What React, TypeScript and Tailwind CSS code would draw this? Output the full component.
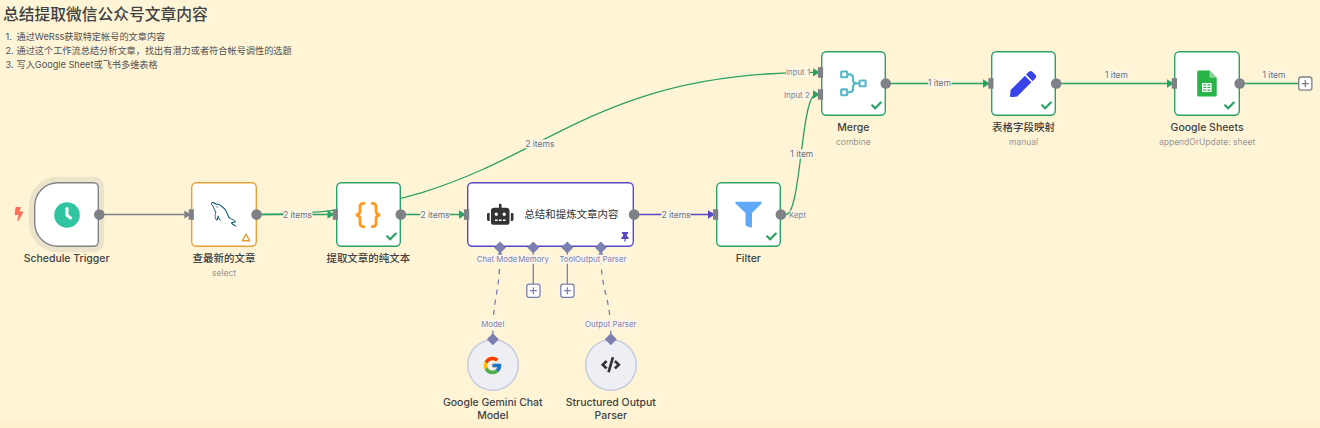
import React from "react";
import { FaRobot, FaThumbtack, FaCheck, FaBolt, FaPen, FaCode } from "react-icons/fa";
import { FcGoogle } from "react-icons/fc";
import { GrMysql } from "react-icons/gr";

type BoxProps = { className: string; children?: React.ReactNode };

type NodeProps = {
  place: string;
  box: string;
  title?: React.ReactNode;
  sub?: string;
  done?: boolean;
  children: React.ReactNode;
};

/** A node on the canvas: the icon box with its caption stacked below. */
function Node({ place, box, title, sub, done, children }: NodeProps) {
  return (
    <div className={`absolute flex flex-col items-center gap-[4.6px] ${place}`}>
      <div className={`relative flex shrink-0 items-center justify-center ${box}`}>
        {children}
        {done && <FaCheck className="absolute bottom-[5px] right-[4.4px] size-[11px] text-[#2ba164]" />}
      </div>
      {title && (
        <div className="flex flex-col items-center gap-[2.4px] whitespace-nowrap text-center">
          <div className="text-[10.47px] font-medium leading-[13px] text-[#414244]">{title}</div>
          {sub && <div className="text-[8.5px] leading-[12px] text-[#9a9794]">{sub}</div>}
        </div>
      )}
    </div>
  );
}

const successBox = "size-[65.4px] rounded-[5.2px] bg-white shadow-[inset_0_0_0_1.4px_#2ba164]";
const circleBox = "size-[52.4px] rounded-full bg-[#eeeff5] shadow-[inset_0_0_0_1.4px_#c5c9da]";

function EdgeLabel({ className, children }: BoxProps) {
  return (
    <div
      className={`absolute -translate-x-1/2 -translate-y-1/2 whitespace-nowrap bg-[#fbf6e7] text-[8.5px] leading-[9px] text-[#6f7178] ${className}`}
    >
      {children}
    </div>
  );
}

function PortLabel({ className, children }: BoxProps) {
  return (
    <div
      className={`absolute -translate-x-1/2 -translate-y-1/2 whitespace-nowrap bg-[#fbf6e9] text-[7.85px] leading-[8.5px] ${className}`}
    >
      {children}
    </div>
  );
}

function Edges() {
  return (
    <svg className="absolute inset-0" width="1320" height="428" viewBox="0 0 1320 428" fill="none">
      <path d="M99 214.5H187" stroke="#7e8186" strokeWidth="1.3" />
      <path d="M184.3 210.6L191 214.5L184.3 218.4Z" fill="#7e8186" />
      <g stroke="#2ba164" strokeWidth="1.3">
        <path d="M257 214.5H331" />
        <path d="M257 214.5C536 214.5 536 72.3 815 72.3" />
        <path d="M401 214.5H462" />
        <path d="M786 214.5C801 214.5 801 94.5 816 94.5" />
        <path d="M886 83.5H986" />
        <path d="M1056 83.5H1169" />
        <path d="M1240 83.5H1298" />
      </g>
      <g fill="#2ba164">
        <path d="M327.5 210.2L334.5 214.5L327.5 218.8Z" />
        <path d="M459 210.2L466 214.5L459 218.8Z" />
        <path d="M813 68.2L820 72.3L813 76.6Z" />
        <path d="M813 90.2L820 94.5L813 98.8Z" />
        <path d="M983 79.2L990 83.5L983 87.8Z" />
        <path d="M1167 79.2L1174 83.5L1167 87.8Z" />
      </g>
      <path d="M634 214.5H711" stroke="#5a48c4" strokeWidth="1.3" />
      <path d="M708 210.2L715 214.5L708 218.8Z" fill="#5a48c4" />
      <g stroke="#7b7fb2" strokeWidth="1.3">
        <path d="M533.3 250V284" />
        <path d="M567.3 250V284" />
        <path d="M492.8 337C492.8 294 500 294 500 252" strokeDasharray="5.2 5.2" strokeDashoffset="-1" />
        <path d="M610.8 337C610.8 294 600.8 294 600.8 252" strokeDasharray="5.2 5.2" strokeDashoffset="-1" />
      </g>
      <path d="M497 256L500 250L503 256ZM597.8 256L600.8 250L603.8 256Z" fill="#7b7fb2" />
    </svg>
  );
}

function Handles() {
  return (
    <svg className="absolute inset-0" width="1320" height="428" viewBox="0 0 1320 428">
      <g fill="#7e8186">
        <circle cx="99.3" cy="214.6" r="5.3" />
        <circle cx="256.6" cy="214.6" r="5.3" />
        <circle cx="400.8" cy="214.6" r="5.3" />
        <circle cx="634.1" cy="214.6" r="5.3" />
        <circle cx="780.9" cy="214.6" r="5.3" />
        <circle cx="885.8" cy="83.5" r="5.3" />
        <circle cx="1056.2" cy="83.5" r="5.3" />
        <circle cx="1239.7" cy="83.5" r="5.3" />
        <rect x="188.7" y="209.3" width="5.2" height="10.5" />
        <rect x="332.8" y="209.3" width="5.2" height="10.5" />
        <rect x="464" y="209.3" width="5.2" height="10.5" />
        <rect x="713" y="209.3" width="5.2" height="10.5" />
        <rect x="817.9" y="67.2" width="5.2" height="10.5" />
        <rect x="817.9" y="89.2" width="5.2" height="10.5" />
        <rect x="988.3" y="78.2" width="5.2" height="10.5" />
        <rect x="1171.8" y="78.2" width="5.2" height="10.5" />
      </g>
      <g fill="#7b7fb2">
        <path d="M500 241.5L506 247.5L500 253.5L494 247.5Z" />
        <path d="M533.3 241.5L539.3 247.5L533.3 253.5L527.3 247.5Z" />
        <path d="M567.3 241.5L573.3 247.5L567.3 253.5L561.3 247.5Z" />
        <path d="M600.8 241.5L606.8 247.5L600.8 253.5L594.8 247.5Z" />
        <path d="M492.8 333.3L498.8 339.3L492.8 345.3L486.8 339.3Z" />
        <path d="M610.8 333.3L616.8 339.3L610.8 345.3L604.8 339.3Z" />
      </g>
      <g fill="#fff" stroke="#7b7fb2" strokeWidth="1.3">
        <rect x="526.8" y="284.1" width="13.2" height="13.2" rx="2.4" />
        <rect x="560.8" y="284.1" width="13.2" height="13.2" rx="2.4" />
        <path d="M533.4 287.2V294.2M529.9 290.7H536.9M567.4 287.2V294.2M563.9 290.7H570.9" />
      </g>
      <g fill="#fff" stroke="#7e8186" strokeWidth="1.3">
        <rect x="1298.7" y="77" width="13.2" height="13.2" rx="2.4" />
        <path d="M1305.3 80.1V87.1M1301.8 83.6H1308.8" />
      </g>
    </svg>
  );
}

export default function App() {
  return (
    <main className="relative h-[428px] w-[1320px] overflow-hidden bg-[linear-gradient(to_bottom,#fff5d6_414px,#fff0cd_428px)] font-['Inter','Noto_Sans_CJK_SC',sans-serif]">
      <header className="flex flex-col gap-[5px] pl-[3px] pt-[4px] text-[#414244]">
        <h1 className="text-[15.75px] font-medium leading-[21px]">总结提取微信公众号文章内容</h1>
        <ol className="pl-[2.5px] text-[9.19px] leading-[14px] text-[#505053]">
          <li className="flex"><span className="w-[11px]">1.</span><span>通过WeRss获取特定帐号的文章内容</span></li>
          <li className="flex"><span className="w-[11px]">2.</span><span>通过这个工作流总结分析文章，找出有潜力或者符合帐号调性的选题</span></li>
          <li className="flex"><span className="w-[11px]">3.</span><span>写入Google Sheet或飞书多维表格</span></li>
        </ol>
      </header>

      <Edges />

      <FaBolt className="absolute left-[13px] top-[207px] h-[14px] w-[12px] text-[#ff6f5c]" />
      <Node
        place="left-[6.6px] top-[182px] w-[120px]"
        box="size-[65.4px] rounded-[24px_5.2px_5.2px_24px] bg-white shadow-[inset_0_0_0_1.4px_#7e8186,0_0_0_5.2px_#ebe3ca]"
        title="Schedule Trigger"
      >
        <svg width="26" height="26" viewBox="0 0 26 26" fill="none">
          <circle cx="13" cy="13" r="12.8" fill="#31c4a0" />
          <path d="M13 6.5V13.2L16.5 16" stroke="#fff" strokeWidth="3" strokeLinecap="round" />
        </svg>
      </Node>

      <Node
        place="left-[164px] top-[182px] w-[120px]"
        box="size-[65.4px] rounded-[5.2px] bg-white shadow-[inset_0_0_0_1.4px_#e5a03c]"
        title="查最新的文章"
        sub="select"
      >
        <GrMysql className="size-[26px] text-[#00546b]" />
        <svg className="absolute bottom-[5.5px] right-[5.5px]" width="10" height="9" viewBox="0 0 10 9" fill="none">
          <path d="M5 1.2L8.8 7.8H1.2Z" stroke="#e5a03c" strokeWidth="1.4" strokeLinejoin="round" />
        </svg>
      </Node>

      <Node place="left-[308.3px] top-[182px] w-[120px]" box={successBox} title="提取文章的纯文本" done>
        <svg width="26" height="26" viewBox="0 0 26 26" fill="none" stroke="#ff9922" strokeWidth="2.8">
          <path d="M10 1.4H8.4Q5 1.4 5 4.8V8.8Q5 13 0.6 13Q5 13 5 17.2V21.2Q5 24.6 8.4 24.6H10" />
          <path d="M16 1.4H17.6Q21 1.4 21 4.8V8.8Q21 13 25.4 13Q21 13 21 17.2V21.2Q21 24.6 17.6 24.6H16" />
        </svg>
      </Node>

      <Node
        place="left-[466.6px] top-[182px] w-[167.6px]"
        box="h-[65.4px] w-[167.6px] gap-[10.5px] rounded-[5.2px] bg-white pl-[5px] shadow-[inset_0_0_0_1.4px_#5a48c4]"
      >
        <FaRobot className="size-[26.5px] text-[#333]" />
        <span className="whitespace-nowrap text-[10.47px] text-[#333]">总结和提炼文章内容</span>
        <FaThumbtack className="absolute bottom-[5.5px] right-[4px] size-[10px] text-[#5a48c4]" />
      </Node>

      <Node place="left-[688.3px] top-[182px] w-[120px]" box={successBox} title="Filter" done>
        <svg width="27" height="27" viewBox="0 0 27 27" fill="#60a9f8">
          <path d="M.5 .7H26.5V2.6L17 12V26.2Q15 27.4 10.5 24.2V12L.5 2.6Z" />
        </svg>
      </Node>

      <Node place="left-[793.3px] top-[51px] w-[120px]" box={successBox} title="Merge" sub="combine" done>
        <svg width="27" height="27" viewBox="0 0 27 27" fill="none" stroke="#54b8c9" strokeWidth="2.1">
          <rect x="1.2" y="1.5" width="6" height="5.8" rx=".6" />
          <rect x="1.2" y="19.4" width="6" height="5.8" rx=".6" />
          <rect x="19.6" y="10.5" width="6" height="5.8" rx=".6" />
          <path d="M7.2 4.4H9.5Q13 4.4 13 7.6V9.9Q13 13.4 16.5 13.4H19.6M16.5 13.4Q13 13.4 13 16.9V19.1Q13 22.3 9.5 22.3H7.2" />
        </svg>
      </Node>

      <Node place="left-[963.5px] top-[51px] w-[120px]" box={successBox} title="表格字段映射" sub="manual" done>
        <FaPen className="size-[26.2px] text-[#3a42e9]" />
      </Node>

      <Node place="left-[1147.1px] top-[51px] w-[120px]" box={successBox} title="Google Sheets" sub="appendOrUpdate: sheet" done>
        <svg width="20" height="27" viewBox="0 0 20 27">
          <path d="M1.7 .5H12.5L19.7 7.7V25Q19.7 26.5 18.2 26.5H1.7Q.2 26.5 .2 25V2Q.2 .5 1.7 .5Z" fill="#28b446" />
          <path d="M12.5 .5L19.7 7.7H12.5Z" fill="#8ad59a" />
          <rect x="5" y="13" width="9.6" height="9" fill="#fff" />
          <path d="M6.2 14.8H9.2M10.4 14.8H13.4M6.2 17.5H9.2M10.4 17.5H13.4M6.2 20.2H9.2M10.4 20.2H13.4" stroke="#28b446" strokeWidth="1.2" />
        </svg>
      </Node>

      <Node place="left-[432.8px] top-[339px] w-[120px]" box={circleBox} title={<>Google Gemini Chat<br />Model</>}>
        <FcGoogle className="size-[21px]" />
      </Node>

      <Node place="left-[550.8px] top-[339px] w-[120px]" box={circleBox} title={<>Structured Output<br />Parser</>}>
        <FaCode className="size-[19.5px] text-[#333]" />
      </Node>

      <EdgeLabel className="left-[297.5px] top-[215px]">2 items</EdgeLabel>
      <EdgeLabel className="left-[435px] top-[215px]">2 items</EdgeLabel>
      <EdgeLabel className="left-[676px] top-[215px]">2 items</EdgeLabel>
      <EdgeLabel className="left-[539.8px] top-[144px]">2 items</EdgeLabel>
      <EdgeLabel className="left-[801.8px] top-[154.2px]">1 item</EdgeLabel>
      <EdgeLabel className="left-[939.5px] top-[83.3px]">1 item</EdgeLabel>
      <EdgeLabel className="left-[1116.5px] top-[75px]">1 item</EdgeLabel>
      <EdgeLabel className="left-[1274px] top-[75px]">1 item</EdgeLabel>

      <PortLabel className="left-[798px] top-[72.3px] text-[#7e8186]">Input 1</PortLabel>
      <PortLabel className="left-[796.8px] top-[94.5px] text-[#7e8186]">Input 2</PortLabel>
      <PortLabel className="left-[797.5px] top-[214.5px] text-[#7e8186]">Kept</PortLabel>
      <PortLabel className="left-[498px] top-[259.4px] text-[#7b7fb2]">Chat Model</PortLabel>
      <PortLabel className="left-[533.5px] top-[259.4px] px-[1.5px] text-[#7b7fb2]">Memory</PortLabel>
      <PortLabel className="left-[567.3px] top-[259.4px] text-[#7b7fb2]">Tool</PortLabel>
      <PortLabel className="left-[600.8px] top-[259.4px] text-[#7b7fb2]">Output Parser</PortLabel>
      <PortLabel className="left-[492.8px] top-[324.4px] text-[#7b7fb2]">Model</PortLabel>
      <PortLabel className="left-[610.8px] top-[324.4px] text-[#7b7fb2]">Output Parser</PortLabel>

      <Handles />
    </main>
  );
}
